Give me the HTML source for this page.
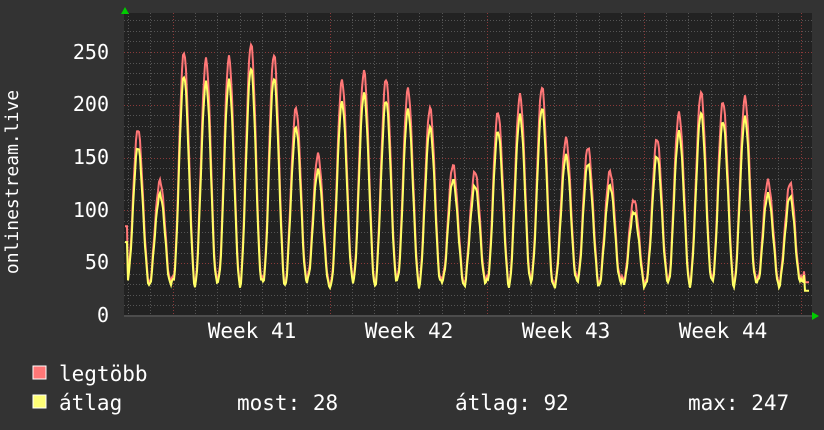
<!DOCTYPE html>
<html><head><meta charset="utf-8"><style>
html,body{margin:0;padding:0;background:#333333;}
svg{display:block;}
text{font-family:"DejaVu Sans Mono","Liberation Mono",monospace;fill:#ffffff;}
</style></head><body>
<svg id="g" width="824" height="430" xmlns="http://www.w3.org/2000/svg">
<rect x="0" y="0" width="824" height="430" fill="#333333"/>
<rect x="124" y="13" width="688" height="304" fill="#222222"/>
<g id="grid"></g>
<g id="lines"></g>
<path d="M121,14 L125,7 L129,14 Z" fill="#00cc00"/>
<path d="M812,312 L819,316 L812,320 Z" fill="#00cc00"/>
<line x1="124" y1="316" x2="812" y2="316" stroke="#777" stroke-width="1"/>
<g font-size="20" text-anchor="end">
<text x="109" y="59">250</text>
<text x="109" y="111">200</text>
<text x="109" y="164">150</text>
<text x="109" y="217">100</text>
<text x="109" y="269">50</text>
<text x="109" y="322">0</text>
</g>
<g font-size="21" text-anchor="middle">
<text x="252" y="338">Week 41</text>
<text x="409" y="338">Week 42</text>
<text x="566" y="338">Week 43</text>
<text x="723" y="338">Week 44</text>
</g>
<text font-size="18" transform="translate(18,182) rotate(-90)" text-anchor="middle">onlinestream.live</text>
<rect x="33" y="366" width="13" height="13" fill="#ff7777" stroke="#ffffff" stroke-width="1"/>
<rect x="33" y="395" width="13" height="13" fill="#ffff77" stroke="#ffffff" stroke-width="1"/>
<g font-size="21">
<text x="59" y="381">legtöbb</text>
<text x="59" y="410">átlag</text>
<text x="237" y="410">most: 28</text>
<text x="455" y="410">átlag: 92</text>
<text x="688" y="410">max: 247</text>
</g>
</svg>
<script>
(function(){
var ns="http://www.w3.org/2000/svg";
var grid=document.getElementById('grid');
function ln(x1,y1,x2,y2,c){var l=document.createElementNS(ns,'line');l.setAttribute('x1',x1);l.setAttribute('y1',y1);l.setAttribute('x2',x2);l.setAttribute('y2',y2);l.setAttribute('stroke',c);l.setAttribute('stroke-width','1');l.setAttribute('stroke-dasharray','1,2');grid.appendChild(l);}
function Y(v){return 316-v*1.056;}
for(var v=10;v<=280;v+=10){var y=Math.round(Y(v))+0.5;if(y<13)break;ln(124,y,812,y,v%50==0?'#8a3a3a':'#555555');}
for(var x=172.5-22.43*2;x<812;x+=22.43){var xx=Math.round(x)+0.5;if(xx<125)continue;var wk=Math.abs(((xx-172.5)/157)-Math.round((xx-172.5)/157))<0.02;ln(xx,13,xx,316,wk?'#8a3a3a':'#555555');}
var peaks=[[138,177],[160,128],[184,250],[206,243],[229,245],[251,258],[274,248],[296,197],[318,153],[342,223],[364,232],[386,225],[408,215],[430,197],[453,143],[475,137],[498,193],[520,209],[542,217],[566,168],[588,160],[610,137],[634,110],[657,168],[679,192],[701,212],[723,203],[745,207],[768,128],[790,126]];
function val(x,ratio){
 var best=null,bd=1e9;for(var i=0;i<peaks.length;i++){var d=Math.abs(x-peaks[i][0]);if(d<bd){bd=d;best=peaks[i];}}
 var u=x-best[0];var low=33+3*Math.sin(x*0.7);
 var f=Math.pow((1+Math.cos(2*Math.PI*u/22.4))/2,1.1);
 if(x>800){f=f*0.8;}
 var pk=best[1]*ratio;
 return low*(ratio<1?0.92:1)+(pk-low)*f+2*Math.sin(x*1.9);
}
function path(ratio,col){
 var d='';for(var x=125;x<=809;x++){var v=val(x,ratio);if(x<128)v=ratio<1?70:85;if(x>=805)v=ratio<1?24:32;d+=(x==125?'M':'L')+x+','+Y(v).toFixed(1);}
 var p=document.createElementNS(ns,'path');p.setAttribute('d',d);p.setAttribute('fill','none');p.setAttribute('stroke',col);p.setAttribute('stroke-width','2');document.getElementById('lines').appendChild(p);
}
path(1,'#ff7777');path(0.92,'#ffff66');
})();
</script>
</body></html>
